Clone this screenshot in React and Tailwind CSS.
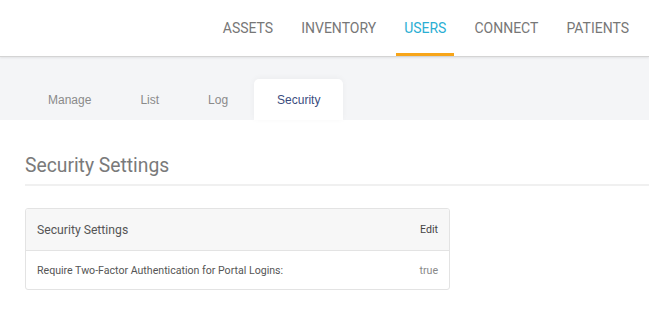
export default function App() {
  const nav = ["ASSETS", "INVENTORY", "USERS", "CONNECT", "PATIENTS"];
  const tabs = ["Manage", "List", "Log", "Security"];
  return (
    <div className="w-[649px] h-[336px] bg-white overflow-hidden" style={{ fontFamily: "Roboto, sans-serif" }}>
      <div className="h-[57px] flex justify-end items-stretch pr-3 gap-3 border-b border-[#d4d4d4] bg-white shadow-[0_1px_2px_rgba(0,0,0,0.08)] relative z-10">
        {nav.map((n) => (
          <div
            key={n}
            className={`px-2 pt-1 flex items-center text-[14px] border-b-[3px] ${
              n === "USERS" ? "text-[#2aaed3] border-[#f7a519]" : "text-[#777777] border-transparent"
            }`}
          >
            {n}
          </div>
        ))}
      </div>
      <div className="h-[63px] bg-[#f4f5f7] flex items-end pl-[25px] gap-[3px]">
        {tabs.map((t) => (
          <div
            key={t}
            className={`h-[41px] px-[23px] flex items-center text-[12px] rounded-t-[5px] ${
              t === "Security" ? "bg-white text-[#3b4c7e] shadow-[0_-1px_6px_rgba(0,0,0,0.04)]" : "text-[#8a8a8a]"
            }`}
            style={{ fontFamily: "'Liberation Sans', Arial, sans-serif" }}
          >
            {t}
          </div>
        ))}
      </div>
      <div className="pl-[25px]">
        <div className="mt-[32px] h-[28px] text-[19.3px] leading-[28px] text-[#7a7a7a]">Security Settings</div>
        <div className="mt-[4px] h-[2px] bg-[#f0f0f0]" />
        <div className="mt-[22px] w-[425px] border border-[#e3e3e3] rounded-[3px] overflow-hidden">
          <div className="h-[42px] bg-[#f7f7f7] border-b border-[#e3e3e3] flex items-center justify-between px-[11px]">
            <span className="text-[12.2px] text-[#555555] pt-px">Security Settings</span>
            <span className="text-[10.6px] text-[#444444] pt-px">Edit</span>
          </div>
          <div className="h-[38px] flex items-center justify-between px-[11px]">
            <span className="text-[10.6px] text-[#555555] pt-[2px]">Require Two-Factor Authentication for Portal Logins:</span>
            <span className="text-[10.6px] text-[#888888] pt-[2px]">true</span>
          </div>
        </div>
      </div>
    </div>
  );
}
